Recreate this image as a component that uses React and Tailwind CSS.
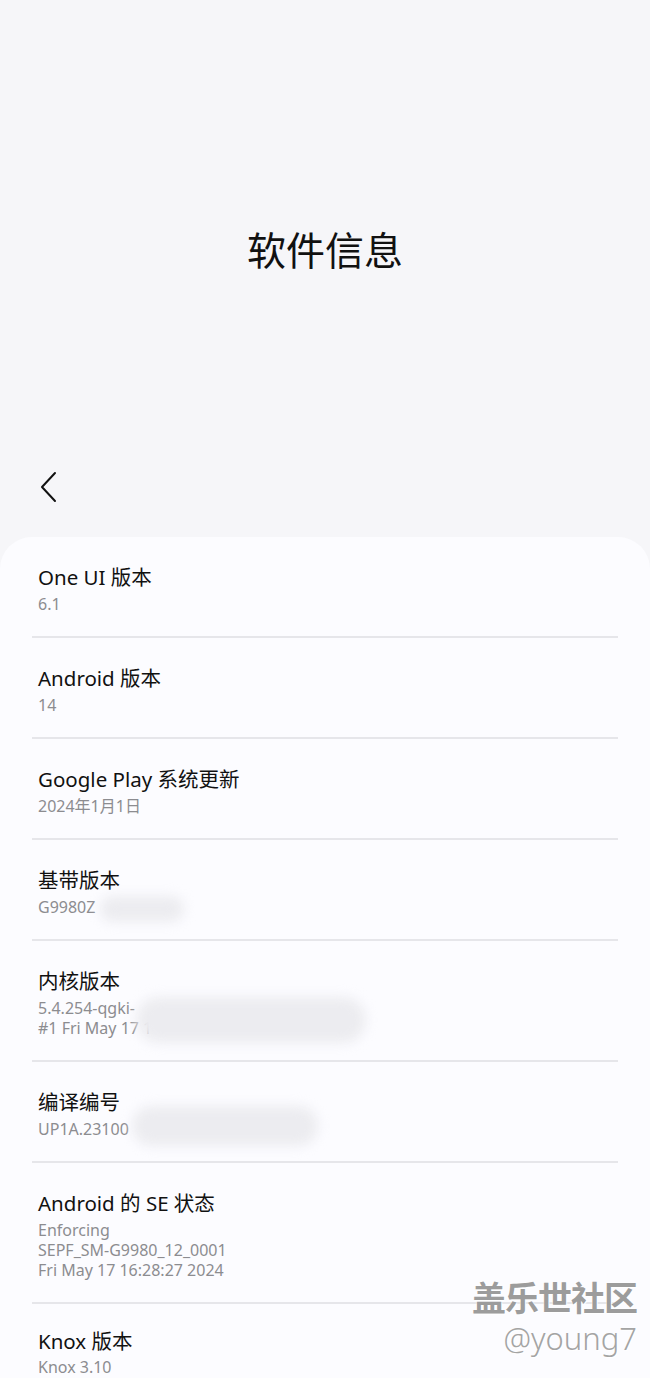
import React from 'react';

const rows = [
    { title: 'One UI 版本', lines: ['6.1'] },
    { title: 'Android 版本', lines: ['14'] },
    { title: 'Google Play 系统更新', lines: ['2024年1月1日'] },
    { title: '基带版本', lines: ['G9980Z'], blur: 'left-[68px] top-[56px] w-[84px] h-[26px]' },
    { title: '内核版本', lines: ['5.4.254-qgki-', '#1 Fri May 17 1'], blur: 'left-[104px] top-[56px] w-[230px] h-[46px]' },
    { title: '编译编号', lines: ['UP1A.23100'], blur: 'left-[100px] top-[44px] w-[186px] h-[40px]' },
    { title: 'Android 的 SE 状态', lines: ['Enforcing', 'SEPF_SM-G9980_12_0001', 'Fri May 17 16:28:27 2024'] },
    { title: 'Knox 版本', lines: ['Knox 3.10'] },
];

export default function App() {
    return (
        <div className="relative min-h-screen bg-[#f6f6f9] font-['Noto_Sans','Noto_Sans_CJK_SC',sans-serif] overflow-hidden">
            <header className="h-[537px] flex flex-col">
                <h1 className="pt-[228px] text-center text-[39px] leading-[44px] text-[#111] font-normal">软件信息</h1>
                <button className="mt-[199px] ml-[33px] w-[32px] h-[32px] flex items-center justify-center">
                    <svg width="20" height="32" viewBox="0 0 20 32" fill="none" stroke="#111" strokeWidth="2" strokeLinecap="round" strokeLinejoin="round">
                        <path d="M16 2 L3 16 L16 30" />
                    </svg>
                </button>
            </header>

            <main className="rounded-t-[32px] bg-[#fcfcff] px-[32px] min-h-[841px]">
                {rows.map((row, i) => {
                    const last = i === rows.length - 1;
                    return (
                        <div key={i} className={`relative pl-[6px] pb-[22px] ${last ? 'pt-[24px]' : 'pt-[27px] border-b-2 border-[#e6e6ea]'}`}>
                            <div className="text-[20.5px] leading-[26px] text-[#111]">{row.title}</div>
                            <div className={last ? 'mt-[3px]' : 'mt-[4px]'}>
                                {row.lines.map((line, j) => (
                                    <div key={j} className="text-[16px] leading-[20px] text-[#8c8c90]">{line}</div>
                                ))}
                            </div>
                            {row.blur && (
                                <div className={`absolute ${row.blur} rounded-full bg-[#ececf0] blur-[6px]`} />
                            )}
                        </div>
                    );
                })}
            </main>

            <div className="absolute right-[13px] top-[1278px] flex flex-col items-end text-[#9c9c9c] [text-shadow:0_0_2px_#fff,1px_1px_1px_#fff]">
                <span className="text-[34px] leading-[40px] font-bold tracking-[-1px]">盖乐世社区</span>
                <span className="text-[31px] leading-[40px] font-light text-[#a4a4a4]">@young7</span>
            </div>
        </div>
    );
}
